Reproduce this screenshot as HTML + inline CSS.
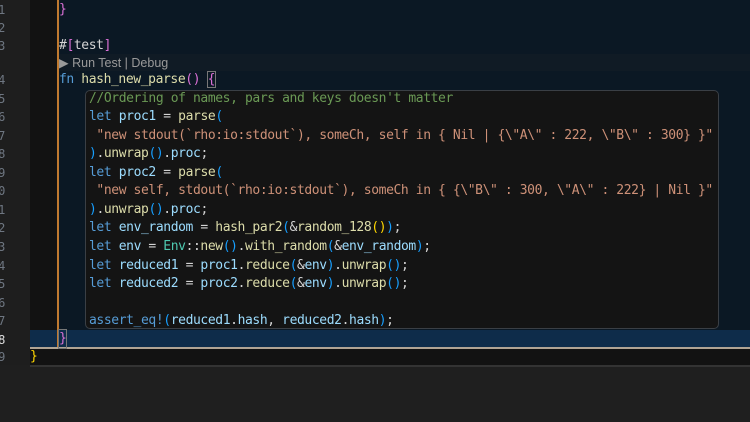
<!DOCTYPE html>
<html><head><meta charset="utf-8"><style>
body{margin:0;width:750px;height:422px;overflow:hidden;background:#1f1f1f;position:relative;font-family:"DejaVu Sans Mono","Liberation Mono",monospace;font-size:13px;letter-spacing:-0.4px}
.a{position:absolute}
.l{position:absolute;white-space:pre;height:18px;line-height:18px}
.n{position:absolute;left:-7px;width:12px;text-align:right;color:#6e7681;font-size:12px;line-height:18px}
.k{color:#569cd6}.v{color:#9cdcfe}.f{color:#dcdcaa}.s{color:#ce9178}.c{color:#6a9955}.p{color:#da70d6}.y{color:#ffd700}.b{color:#179fff}.t{color:#4ec9b0}.w{color:#d4d4d4}
</style></head><body>
<div class="a" style="left:0;top:0;width:30px;height:365px;background:#1e1e1e"></div>
<div class="a" style="left:30px;top:0;width:27px;height:365px;background:#121212"></div>
<div class="a" style="left:57px;top:0;width:693px;height:330px;background:#0b1824"></div>
<div class="a" style="left:30px;top:330px;width:720px;height:17px;background:#0e2c4a"></div>
<div class="a" style="left:30px;top:347px;width:720px;height:2px;background:#b0a494"></div>
<div class="a" style="left:30px;top:349px;width:720px;height:16px;background:#121212"></div>
<div class="a" style="left:30px;top:365px;width:720px;height:2px;background:#333"></div>
<div class="a" style="left:57px;top:0;width:2px;height:347px;background:#c07a30"></div>
<div class="a" style="left:85px;top:90px;width:632px;height:237px;background:#141414;border:1px solid #3a3f45;border-radius:5px"></div>
<div class="a" style="left:59px;top:54px;width:691px;height:17px;background:#101b25"></div>

<div class="n" style="top:1px">1</div><div class="n" style="top:19px">2</div><div class="n" style="top:37px">3</div>
<div class="n" style="top:71px">4</div><div class="n" style="top:90px">5</div><div class="n" style="top:108px">6</div>
<div class="n" style="top:127px">7</div><div class="n" style="top:145px">8</div><div class="n" style="top:164px">9</div>
<div class="n" style="top:182px">0</div><div class="n" style="top:201px">1</div><div class="n" style="top:219px">2</div>
<div class="n" style="top:238px">3</div><div class="n" style="top:257px">4</div><div class="n" style="top:275px">5</div>
<div class="n" style="top:294px">6</div><div class="n" style="top:312px">7</div><div class="n" style="top:331px;color:#ddd">8</div>
<div class="n" style="top:348px">9</div>

<div class="l p" style="left:59px;top:1px">}</div>
<div class="l w" style="left:59px;top:37px">#<span class="p">[</span>test<span class="p">]</span></div>
<div class="l" style="left:59px;top:54px;font-family:'Liberation Sans',sans-serif;font-size:12.5px;letter-spacing:0;color:#9a9a9a">▶ Run Test | Debug</div>
<div class="l" style="left:59px;top:71px"><span class="k">fn</span> <span class="f">hash_new_parse</span><span class="p">()</span> <span class="p" style="outline:1px solid #777">{</span></div>
<div class="l c" style="left:89px;top:90px">//Ordering of names, pars and keys doesn't matter</div>
<div class="l" style="left:89px;top:108px"><span class="k">let</span> <span class="v">proc1</span> <span class="w">=</span> <span class="f">parse</span><span class="b">(</span></div>
<div class="l s" style="left:89px;top:127px"> "new stdout(`rho:io:stdout`), someCh, self in { Nil | {\"A\" : 222, \"B\" : 300} }"</div>
<div class="l w" style="left:89px;top:145px"><span class="b">)</span>.<span class="f">unwrap</span><span class="b">()</span>.<span class="v">proc</span>;</div>
<div class="l" style="left:89px;top:164px"><span class="k">let</span> <span class="v">proc2</span> <span class="w">=</span> <span class="f">parse</span><span class="b">(</span></div>
<div class="l s" style="left:89px;top:182px"> "new self, stdout(`rho:io:stdout`), someCh in { {\"B\" : 300, \"A\" : 222} | Nil }"</div>
<div class="l w" style="left:89px;top:201px"><span class="b">)</span>.<span class="f">unwrap</span><span class="b">()</span>.<span class="v">proc</span>;</div>
<div class="l w" style="left:89px;top:219px"><span class="k">let</span> <span class="v">env_random</span> = <span class="f">hash_par2</span><span class="b">(</span>&amp;<span class="f">random_128</span><span class="y">()</span><span class="b">)</span>;</div>
<div class="l w" style="left:89px;top:238px"><span class="k">let</span> <span class="v">env</span> = <span class="t">Env</span>::<span class="f">new</span><span class="b">()</span>.<span class="f">with_random</span><span class="b">(</span>&amp;<span class="v">env_random</span><span class="b">)</span>;</div>
<div class="l w" style="left:89px;top:257px"><span class="k">let</span> <span class="v">reduced1</span> = <span class="v">proc1</span>.<span class="f">reduce</span><span class="b">(</span>&amp;<span class="v">env</span><span class="b">)</span>.<span class="f">unwrap</span><span class="b">()</span>;</div>
<div class="l w" style="left:89px;top:275px"><span class="k">let</span> <span class="v">reduced2</span> = <span class="v">proc2</span>.<span class="f">reduce</span><span class="b">(</span>&amp;<span class="v">env</span><span class="b">)</span>.<span class="f">unwrap</span><span class="b">()</span>;</div>
<div class="l w" style="left:89px;top:312px"><span class="k">assert_eq!</span><span class="b">(</span><span class="v">reduced1</span>.<span class="v">hash</span>, <span class="v">reduced2</span>.<span class="v">hash</span><span class="b">)</span>;</div>
<div class="l p" style="left:59px;top:330px;outline:1px solid #777">}</div>
<div class="l y" style="left:30px;top:348px">}</div>
</body></html>
